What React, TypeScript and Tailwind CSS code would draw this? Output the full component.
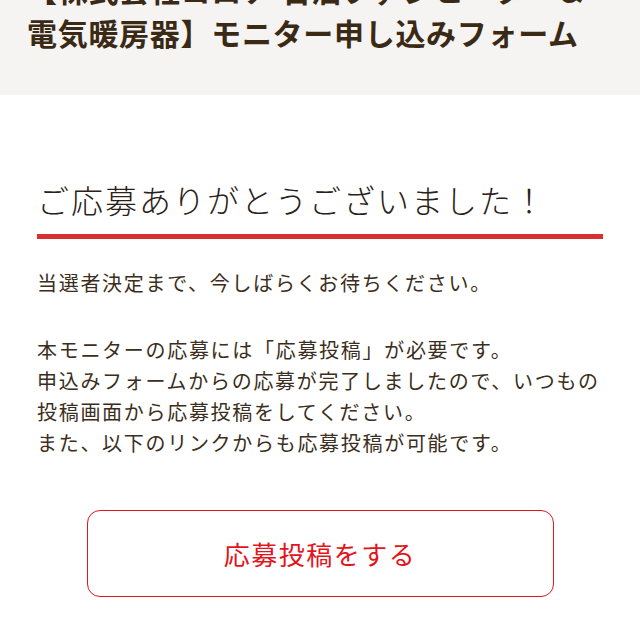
import React from "react";

const jp = {
  fontFamily: '"Noto Sans CJK JP", "Noto Sans", sans-serif',
};

export default function App() {
  return (
    <div className="min-h-[640px] w-[640px] overflow-hidden bg-white" style={jp}>
      {/* Header */}
      <header className="bg-[#f5f4f2] px-[27px] pb-[41px]">
        <h1 className="-mt-[32px] text-[30px] font-bold leading-[43px] tracking-[0.7px] text-[#3a2a15]">
          【株式会社コロナ 石油ファンヒーター＆
          <br />
          電気暖房器】モニター申し込みフォーム
        </h1>
      </header>

      <main className="px-[37px] pt-[80px] pb-10">
        <h2 className="border-b-[5px] border-[#d9302f] pb-[11px] text-[32px] font-light leading-[48px] tracking-[2px] text-[#2a2118]">
          ご応募ありがとうございました！
        </h2>

        <div className="mt-[28px] text-[20px] leading-[31px] tracking-[1.7px] text-[#3b2e20]">
          <p className="mb-[36px]">当選者決定まで、今しばらくお待ちください。</p>
          <p>
            本モニターの応募には「応募投稿」が必要です。
            <br />
            申込みフォームからの応募が完了しましたので、いつもの
            <br />
            投稿画面から応募投稿をしてください。
            <br />
            また、以下のリンクからも応募投稿が可能です。
          </p>
        </div>

        <div className="mt-[52px] flex justify-center">
          <a
            href="#"
            className="flex h-[87px] w-[467px] items-center justify-center rounded-[13px] border-[1.5px] border-[#e2141c] text-[26px] tracking-[1.5px] text-[#e2141c]"
          >
            応募投稿をする
          </a>
        </div>
      </main>
    </div>
  );
}
